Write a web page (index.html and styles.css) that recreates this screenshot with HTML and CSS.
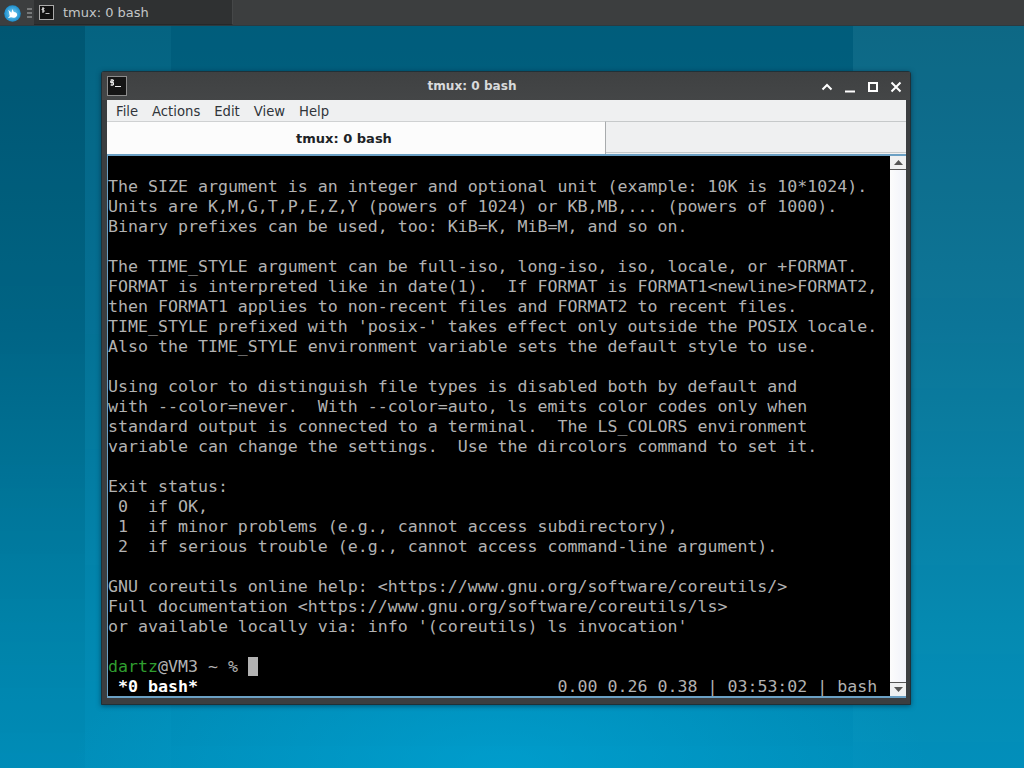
FILE: index.html
```html
<!DOCTYPE html>
<html lang="en">
<head>
<meta charset="utf-8">
<title>tmux: 0 bash</title>
<link rel="stylesheet" href="styles.css">
</head>
<body>
<header class="panel">
  <svg class="logo" viewBox="0 0 16 16" width="17" height="17"><defs><radialGradient id="lg" cx="50%" cy="50%" r="55%"><stop offset="0" stop-color="#7fd2f5"/><stop offset="1" stop-color="#1187c9"/></radialGradient></defs><circle cx="8" cy="8" r="7.8" fill="url(#lg)"/><path d="M4 4.500 7 7.200 8 3.800 9.200 6.600C11.500 6.800 12.600 8 12.400 9.600 11.800 11.800 9 12.600 6.600 11.600L3.600 12.400 5.400 10.300C4.900 8.500 5 6.700 4 4.500Z" fill="#fff"/></svg>
  <div class="handle"><i></i><i></i><i></i></div>
  <div class="task">
    <svg class="term-icon" viewBox="0 0 15 15" width="15" height="15"><rect x=".5" y=".5" width="14" height="14" fill="#111" stroke="#aaa"/><path d="M3 3h2v1H3v1h2v2H3M4 2.500v5M6.500 8.500h4" fill="none" stroke="#eee" stroke-width=".8"/></svg>
    <span class="task-label">tmux: 0 bash</span>
  </div>
</header>
<main class="desktop">
  <section class="window">
    <div class="titlebar">
      <svg class="win-icon" viewBox="0 0 20 20" width="20" height="20"><rect x=".5" y=".5" width="19" height="19" fill="#151515" stroke="#8c8c8c"/><path d="M3.500 4h3v1.200h-3v1.300h3V9h-3M5 3v7M8 10.500h6" fill="none" stroke="#eee" stroke-width="1"/></svg>
      <span class="win-title">tmux: 0 bash</span>
      <div class="win-buttons">
        <svg viewBox="0 0 12 12" width="12" height="12"><path d="M1.500 8.500 6 4l4.500 4.500" fill="none" stroke="#fff" stroke-width="2"/></svg>
        <svg viewBox="0 0 12 12" width="12" height="12"><path d="M1 10.500h10" fill="none" stroke="#fff" stroke-width="2"/></svg>
        <svg viewBox="0 0 12 12" width="12" height="12"><rect x="2" y="2" width="8" height="8" fill="none" stroke="#fff" stroke-width="2"/></svg>
        <svg viewBox="0 0 12 12" width="12" height="12"><path d="M1.500 1.500l9 9M10.500 1.500l-9 9" fill="none" stroke="#fff" stroke-width="2"/></svg>
      </div>
    </div>
    <div class="client">
      <nav class="menubar"><span>File</span><span>Actions</span><span>Edit</span><span>View</span><span>Help</span></nav>
      <div class="tabbar"><div class="tab">tmux: 0 bash</div><div class="tab-rest"></div></div>
      <div class="term-frame">
        <pre class="terminal">

The SIZE argument is an integer and optional unit (example: 10K is 10*1024).
Units are K,M,G,T,P,E,Z,Y (powers of 1024) or KB,MB,... (powers of 1000).
Binary prefixes can be used, too: KiB=K, MiB=M, and so on.

The TIME_STYLE argument can be full-iso, long-iso, iso, locale, or +FORMAT.
FORMAT is interpreted like in date(1).  If FORMAT is FORMAT1&lt;newline&gt;FORMAT2,
then FORMAT1 applies to non-recent files and FORMAT2 to recent files.
TIME_STYLE prefixed with 'posix-' takes effect only outside the POSIX locale.
Also the TIME_STYLE environment variable sets the default style to use.

Using color to distinguish file types is disabled both by default and
with --color=never.  With --color=auto, ls emits color codes only when
standard output is connected to a terminal.  The LS_COLORS environment
variable can change the settings.  Use the dircolors command to set it.

Exit status:
 0  if OK,
 1  if minor problems (e.g., cannot access subdirectory),
 2  if serious trouble (e.g., cannot access command-line argument).

GNU coreutils online help: &lt;https://www.gnu.org/software/coreutils/&gt;
Full documentation &lt;https://www.gnu.org/software/coreutils/ls&gt;
or available locally via: info '(coreutils) ls invocation'

<span class="user">dartz</span>@VM3 ~ % <span class="cursor"> </span>
 <b class="status">*0 bash*</b>                                    0.00 0.26 0.38 | 03:53:02 | bash</pre>
        <div class="scrollbar">
          <div class="sb-btn sb-up"><svg viewBox="0 0 9 5" width="9" height="5"><path d="M4.500 0 9 5H0Z" fill="#555"/></svg></div>
          <div class="sb-track"></div>
          <div class="sb-btn sb-down"><svg viewBox="0 0 9 5" width="9" height="5"><path d="M0 0h9L4.500 5Z" fill="#555"/></svg></div>
        </div>
      </div>
    </div>
  </section>
</main>
</body>
</html>
```

FILE: styles.css
```css
* { box-sizing: border-box; }
html, body { margin: 0; height: 100%; overflow: hidden; }
body {
  width: 1024px;
  height: 768px;
  display: flex;
  flex-direction: column;
  font-family: "DejaVu Sans", sans-serif;
}
.panel {
  height: 26px;
  flex: none;
  background: #3c3e3f;
  display: flex;
  align-items: flex-start;
  padding-left: 4px;
  border-bottom: 1px solid #2c3a40;
}
.logo { margin-top: 5px; flex: none; }
.handle {
  width: 11px;
  margin: 8px 2px 0 0;
  display: flex;
  flex-direction: column;
  align-items: flex-end;
  gap: 2px;
  flex: none;
}
.handle i { display: block; width: 5px; height: 2px; background: #77797a; }
.task {
  width: 199px;
  height: 25px;
  display: flex;
  align-items: center;
  background: #2f3132;
  border-right: 1px solid #454748;
  border-bottom: 1px solid #262829;
  padding-left: 5px;
}
.term-icon { flex: none; }
.task-label { margin-left: 9px; font-size: 13px; color: #c4c6c7; }
.desktop {
  flex: 1;
  position: relative;
  background:
    radial-gradient(ellipse 430px 170px at 500px 742px, rgba(0, 170, 220, .55), rgba(0, 170, 220, 0)),
    linear-gradient(180deg, #00607f 0, #006f93 300px, #0088b0 600px, #008fbb 100%);
}
.desktop::before {
  content: "";
  position: absolute;
  inset: 0;
  background: linear-gradient(90deg, rgba(0,0,0,.10) 0 85px, rgba(255,255,255,.02) 85px 171px, rgba(0,0,0,.03) 171px 853px, rgba(255,255,255,.05) 853px 100%);
  -webkit-mask-image: linear-gradient(180deg, #000 0, #000 250px, rgba(0,0,0,.15) 742px);
  mask-image: linear-gradient(180deg, #000 0, #000 250px, rgba(0,0,0,.15) 742px);
}
.window {
  position: absolute;
  left: 101px;
  top: 45px;
  width: 810px;
  height: 634px;
  background: #3b3e40;
  border: 1px solid #1f3138;
  border-radius: 3px 3px 0 0;
  box-shadow: 0 1px 5px rgba(0, 30, 50, .55);
  padding: 0 4px 6px;
  display: flex;
  flex-direction: column;
}
.titlebar {
  height: 28px;
  flex: none;
  position: relative;
  display: flex;
  align-items: center;
  background: linear-gradient(180deg, #3f4142, #444647);
  margin: 0 -4px;
  padding-left: 5px;
}
.win-icon { flex: none; }
.win-title {
  position: absolute;
  left: 0;
  right: 68px;
  top: 7px;
  text-align: center;
  color: #d8dadb;
  font-size: 12.1px;
  font-weight: 700;
}
.win-buttons {
  position: absolute;
  right: 8px;
  top: 9px;
  display: flex;
  gap: 11px;
}
.win-buttons svg { display: block; }
.client {
  flex: 1;
  min-height: 0;
  display: flex;
  flex-direction: column;
  background: #eff0f1;
  margin: 0 0 0 1px;
}
.menubar {
  height: 21px;
  flex: none;
  background: #eff0f1;
  display: flex;
  align-items: center;
  gap: 14px;
  padding: 1px 0 0 9px;
  font-size: 13.2px;
  color: #30343a;
}
.tabbar {
  height: 33px;
  flex: none;
  display: flex;
}
.tab {
  width: 499px;
  background: #fcfcfc;
  border-top: 1px solid #cfd1d2;
  border-right: 1px solid #a8abad;
  padding-right: 24px;
  text-align: center;
  font-size: 13px;
  font-weight: 700;
  line-height: 33px;
  color: #202326;
}
.tab-rest {
  flex: 1;
  background: #eff0f1;
  border-top: 1px solid #c6c9ca;
  border-bottom: 1px solid #c6c9ca;
  margin-bottom: 1px;
}
.term-frame {
  flex: 1;
  min-height: 0;
  display: flex;
  border: 2px solid #6ba0c4;
  border-width: 2px 0 2px 1px;
  background: #000;
}
.terminal {
  flex: 1;
  margin: 0;
  padding: 1px 0 0;
  overflow: hidden;
  background: #000;
  color: #b2b2b2;
  font-family: "DejaVu Sans Mono", monospace;
  font-size: 16.6px;
  line-height: 20px;
}
.user { color: #2f9e2f; }
.cursor { background: #b2b2b2; }
.status { color: #fff; font-weight: 700; }
.scrollbar {
  width: 16px;
  flex: none;
  display: flex;
  flex-direction: column;
  background: #fcfcfc;
}
.sb-btn {
  height: 14px;
  flex: none;
  display: flex;
  align-items: center;
  justify-content: center;
  background: #eff0f1;
}
.sb-up { border-bottom: 1px solid #555; }
.sb-down { border-top: 1px solid #555; }
.sb-track { flex: 1; background: linear-gradient(90deg, #fcfcfc, #f0f2fa); }
```
